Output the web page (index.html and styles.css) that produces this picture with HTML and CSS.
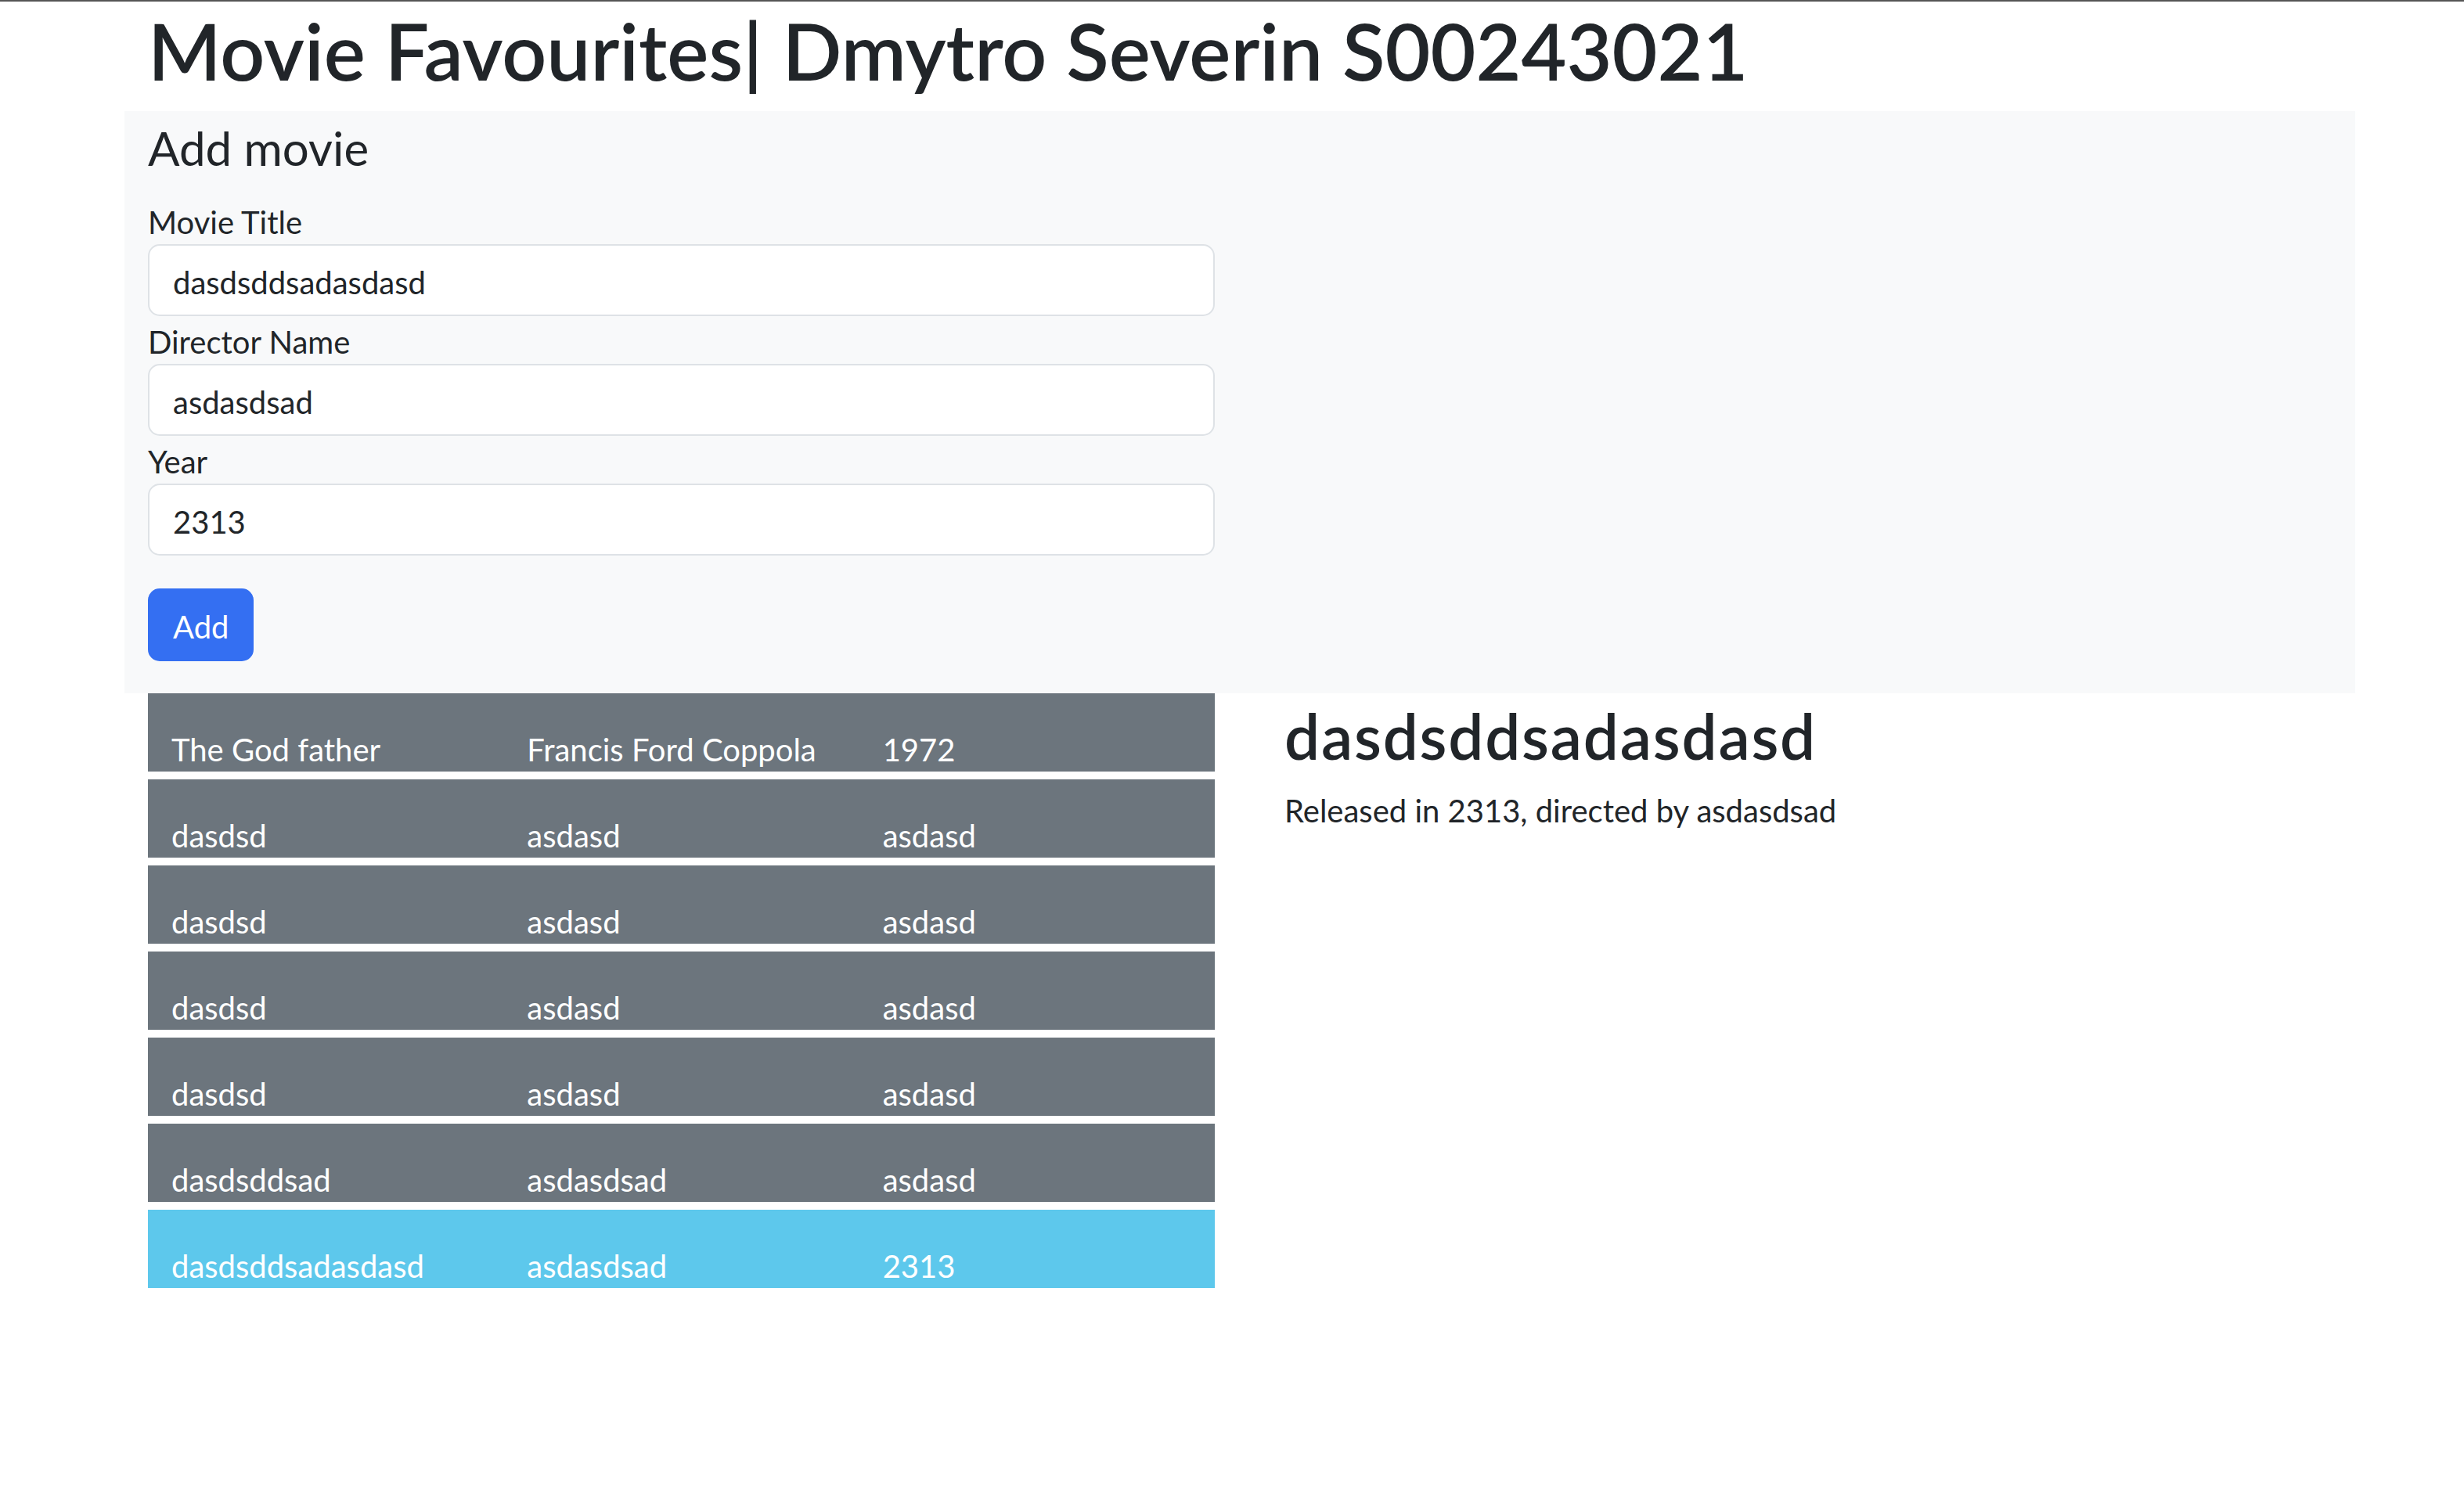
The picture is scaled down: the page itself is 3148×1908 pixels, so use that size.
FILE: index.html
```html
<!DOCTYPE html>
<html lang="en">
<head>
<meta charset="utf-8">
<title>Movie Favourites</title>
<link rel="stylesheet" href="styles.css">
</head>
<body>
<div class="topbar"></div>
<div class="container">
  <h1 class="title">Movie Favourites| Dmytro Severin S00243021</h1>
</div>
<div class="container panel">
  <h4 class="panel-title">Add movie</h4>
  <form class="form">
    <label class="label">Movie Title</label>
    <input class="input" type="text" value="dasdsddsadasdasd">
    <label class="label">Director Name</label>
    <input class="input" type="text" value="asdasdsad">
    <label class="label">Year</label>
    <input class="input" type="text" value="2313">
    <button class="btn" type="button">Add</button>
  </form>
</div>
<div class="container content">
  <div class="list">
    <div class="item"><span>The God father</span><span>Francis Ford Coppola</span><span>1972</span></div>
    <div class="item"><span>dasdsd</span><span>asdasd</span><span>asdasd</span></div>
    <div class="item"><span>dasdsd</span><span>asdasd</span><span>asdasd</span></div>
    <div class="item"><span>dasdsd</span><span>asdasd</span><span>asdasd</span></div>
    <div class="item"><span>dasdsd</span><span>asdasd</span><span>asdasd</span></div>
    <div class="item"><span>dasdsddsad</span><span>asdasdsad</span><span>asdasd</span></div>
    <div class="item active"><span>dasdsddsadasdasd</span><span>asdasdsad</span><span>2313</span></div>
  </div>
  <div class="details">
    <h2 class="details-title">dasdsddsadasdasd</h2>
    <p class="details-text">Released in 2313, directed by asdasdsad</p>
  </div>
</div>
</body>
</html>
```
FILE: styles.css
```css
* { box-sizing: border-box; }
html, body { margin: 0; padding: 0; }
body {
  font-family: Lato, "Open Sans", sans-serif;
  font-size: 40px;
  line-height: 60px;
  color: #212529;
  background: #fff;
}
.topbar { height: 2px; background: #555; }
.container {
  width: 2850px;
  margin-left: 159px;
  padding: 0 30px;
}
.title {
  margin: 2px 0 18px;
  font-size: 100px;
  line-height: 120px;
  font-weight: 600;
}
.panel {
  background: #f8f9fa;
  padding-top: 11px;
  padding-bottom: 41px;
}
.panel-title {
  margin: 0 0 27px;
  font-size: 60px;
  line-height: 72px;
  font-weight: 400;
}
.form {
  width: 1363px;
  display: flex;
  flex-direction: column;
  align-items: flex-start;
}
.label {
  display: block;
  height: 60px;
  padding-top: 5px;
  line-height: 55px;
}
.input {
  display: block;
  width: 100%;
  height: 92px;
  margin-bottom: 1px;
  padding: 5px 30px 0;
  border: 2px solid #dee2e6;
  border-radius: 15px;
  background: #fff;
  font: inherit;
  color: #212529;
  outline: none;
}
.btn {
  margin-top: 41px;
  height: 93px;
  padding: 5px 30px 0;
  border: 2px solid #346ff2;
  border-radius: 15px;
  background: #346ff2;
  color: #fff;
  font: inherit;
  line-height: 60px;
}
.content {
  display: grid;
  grid-template-columns: 1363px 1fr;
  column-gap: 89px;
}
.list { display: flex; flex-direction: column; gap: 10px; }
.item {
  display: grid;
  grid-template-columns: 1fr 1fr 1fr;
  height: 100px;
  padding-top: 44px;
  background: #6c757d;
  color: #fff;
  line-height: 56px;
}
.item span { padding: 0 30px; white-space: nowrap; }
.item.active { background: #5dc8ec; }
.details { padding-top: 6px; }
.details-title {
  margin: 0 0 18px;
  font-size: 80px;
  line-height: 96px;
  font-weight: 600;
  letter-spacing: 1.8px;
}
.details-text { margin: 0; }
```
